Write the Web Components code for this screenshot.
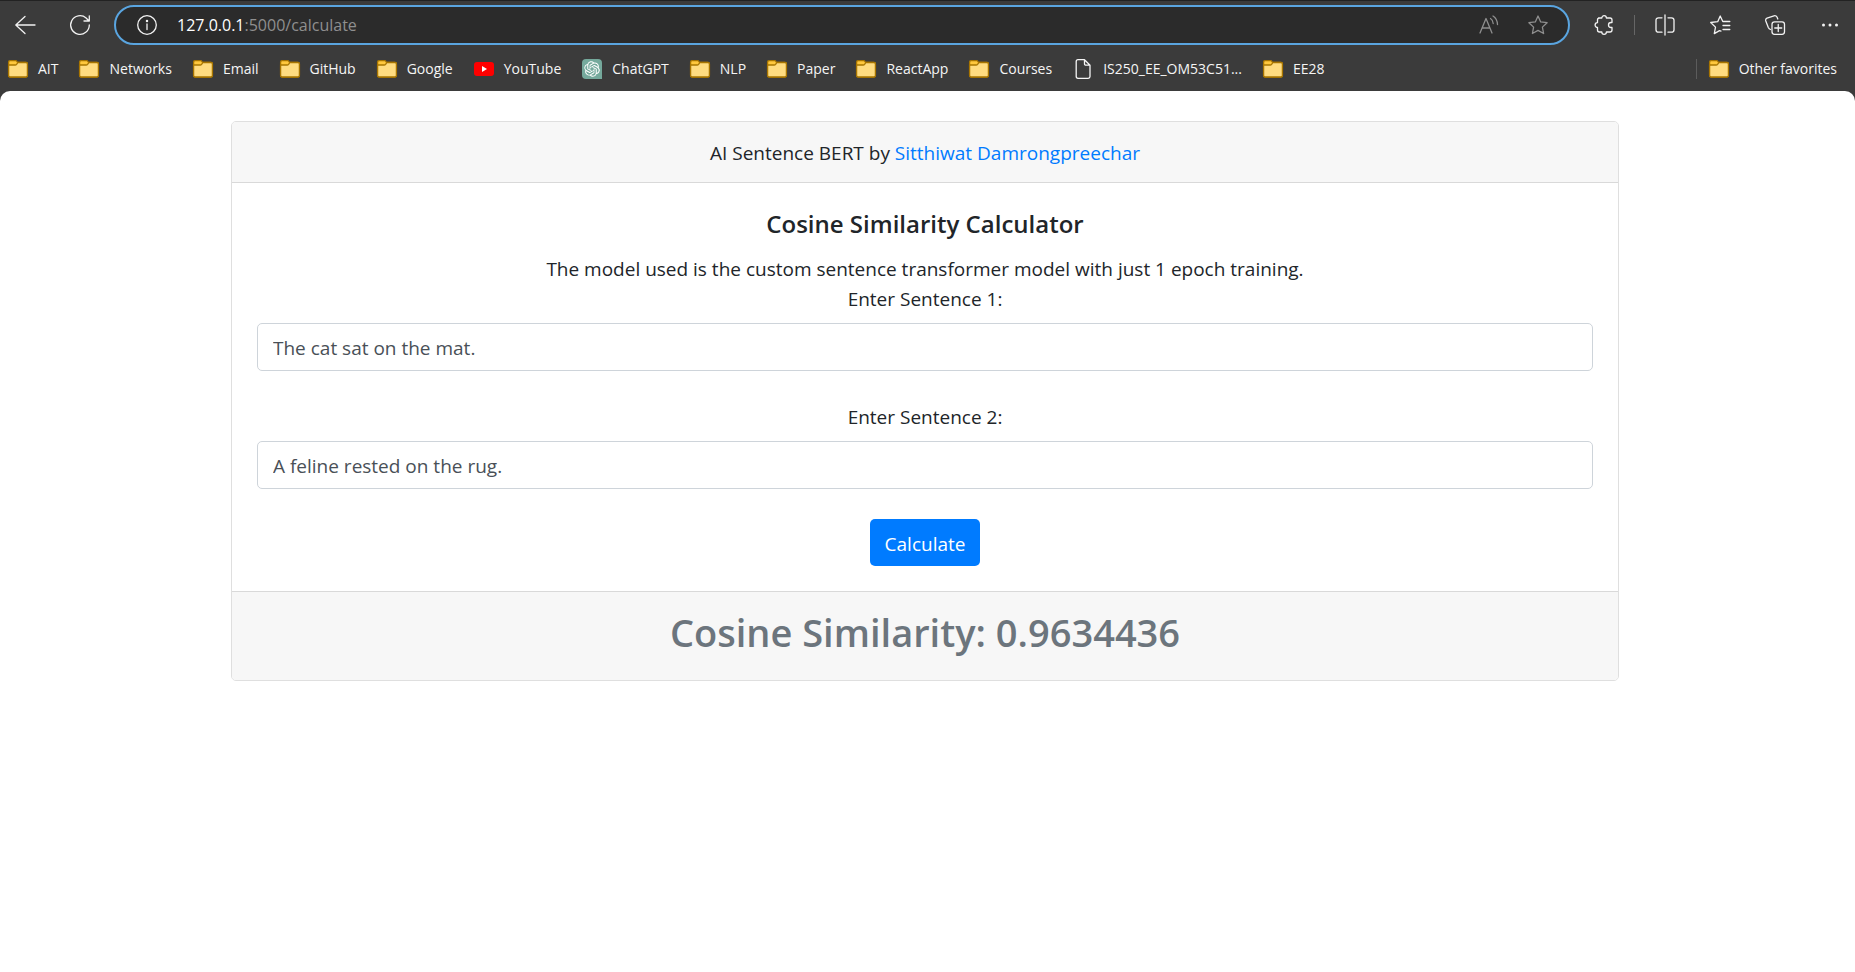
<!DOCTYPE html>
<html lang="en">
<head>
<meta charset="utf-8">
<title>Cosine Similarity Calculator</title>
<style>
html, body { height: 100%; }
body { margin: 0; background: #3b3b3b; color: #212529; font-family: "Open Sans", "Noto Sans", sans-serif; }
</style>
</head>
<body>
<browser-window>
  <address-bar slot="toolbar"></address-bar>
  <favorites-bar slot="toolbar">
    <favorite-item icon="folder">AIT</favorite-item>
    <favorite-item icon="folder">Networks</favorite-item>
    <favorite-item icon="folder">Email</favorite-item>
    <favorite-item icon="folder">GitHub</favorite-item>
    <favorite-item icon="folder">Google</favorite-item>
    <favorite-item icon="youtube">YouTube</favorite-item>
    <favorite-item icon="chatgpt">ChatGPT</favorite-item>
    <favorite-item icon="folder">NLP</favorite-item>
    <favorite-item icon="folder">Paper</favorite-item>
    <favorite-item icon="folder">ReactApp</favorite-item>
    <favorite-item icon="folder">Courses</favorite-item>
    <favorite-item icon="page">IS250_EE_OM53C51...</favorite-item>
    <favorite-item icon="folder">EE28</favorite-item>
    <favorite-item slot="end" icon="folder">Other favorites</favorite-item>
  </favorites-bar>
  <similarity-card>
    <span slot="header">AI Sentence BERT by <author-link href="#author">Sitthiwat Damrongpreechar</author-link></span>
    <span slot="title">Cosine Similarity Calculator</span>
    <span slot="text">The model used is the custom sentence transformer model with just 1 epoch training.</span>
    <sentence-field label="Enter Sentence 1:" value="The cat sat on the mat."></sentence-field>
    <sentence-field label="Enter Sentence 2:" value="A feline rested on the rug."></sentence-field>
    <span slot="result">Cosine Similarity: 0.9634436</span>
  </similarity-card>
</browser-window>

<script>
const ICONS = {
  back: '<path d="M20 10H1M10 1.500.8 10 10 18.500"/>',
  reload: '<path d="M19.300 10a9.300 9.300 0 1 1-3.200-7L19 6M19.300.8V6h-5.300"/>',
  info: '<circle cx="10" cy="10" r="9.300"/><path d="M10 9v5.500"/><circle cx="10" cy="6" r=".6" fill="currentColor"/>',
  read: '<path d="M1 18 7 3.500 13 18M3.200 13h7.600M11.500 3.500c1.600 1 2.500 2.600 2.700 5M14 1c2.800 1.700 4.300 4.500 4.500 8.500"/>',
  star: '<path d="m10 1 2.700 5.900 6.400.8-4.700 4.400 1.200 6.400L10 15.400l-5.600 3.100 1.200-6.400L.9 7.700l6.400-.8z"/>',
  puzzle: '<path d="M4.500 3h3.300a2.300 2.300 0 0 1 4.600 0h3.600q2 0 2 2v2.500h-1a2.500 2.500 0 0 0 0 5h1V15q0 2-2 2h-3.600a2.300 2.300 0 0 1-4.600 0H5.500q-2 0-2-2v-2.600a2.400 2.400 0 0 1 0-4.800V5q0-2 2-2z"/>',
  split: '<path d="M7 2.800H3.500Q1 2.800 1 5.300v9.400q0 2.500 2.500 2.500H7M13 2.800h3.500Q19 2.800 19 5.300v9.400q0 2.500-2.500 2.500H13M10 0v20"/>',
  favorites: '<path d="M19.800 6.500h-7L10.200 1 7.700 6.700l-7 .8 4.800 4.600-1.200 6.500 5.200-3 1.500.5M13 10.500h6.800M13 14.500h6.800"/>',
  collections: '<rect x="7" y="6.800" width="12.500" height="12.500" rx="2.500"/><path d="M13.250 9.500v7M9.750 13h7M5.500 14.500Q4 14 3.300 12.500L.8 6Q.2 4 2 3.200L9 .8q2-.5 3 1.200l.8 2"/>',
  more: '<g fill="currentColor" stroke="none"><circle cx="3.500" cy="10" r="1.500"/><circle cx="10" cy="10" r="1.500"/><circle cx="16.500" cy="10" r="1.500"/></g>',
  folder: '<path fill="#ffc83d" stroke="#a87500" d="M.6 3.200Q.6 1.600 2 1.600h5.600q.8 0 1.200.7l.8 1H18q1.400 0 1.400 1.400v11.900q0 1.400-1.400 1.400H2q-1.400 0-1.400-1.400z"/><path fill="#ffdc80" stroke="#a87500" d="M.6 6h6.500q1 0 1.500-.6l1.300-1.900H18q1.400 0 1.400 1.400v11.700q0 1.400-1.400 1.400H2q-1.400 0-1.400-1.400z"/>',
  youtube: '<rect x="0" y="3" width="20" height="14" rx="3" fill="#f00" stroke="none"/><path d="m8 7 5 3-5 3z" fill="#fff" stroke="none"/>',
  chatgpt: '<path d="M4 0h12q4 0 4 4v16H4q-4 0-4-4V4Q0 0 4 0z" fill="#75a99c" stroke="none"/><path transform="translate(2.200 2.200) scale(.65)" fill="#fff" stroke="none" d="M22.2819 9.8211a5.9847 5.9847 0 0 0-.5157-4.9108 6.0462 6.0462 0 0 0-6.5098-2.9A6.0651 6.0651 0 0 0 4.9807 4.1818a5.9847 5.9847 0 0 0-3.9977 2.9 6.0462 6.0462 0 0 0 .7427 7.0966 5.98 5.98 0 0 0 .511 4.9107 6.051 6.051 0 0 0 6.5146 2.9001A5.9847 5.9847 0 0 0 13.2599 24a6.0557 6.0557 0 0 0 5.7718-4.2058 5.9894 5.9894 0 0 0 3.9977-2.9001 6.0557 6.0557 0 0 0-.7475-7.0729zm-9.022 12.6081a4.4755 4.4755 0 0 1-2.8764-1.0408l.1419-.0804 4.7783-2.7582a.7948.7948 0 0 0 .3927-.6813v-6.7369l2.02 1.1686a.071.071 0 0 1 .038.052v5.5826a4.504 4.504 0 0 1-4.4945 4.4944zm-9.6607-4.1254a4.4708 4.4708 0 0 1-.5346-3.0137l.142.0852 4.783 2.7582a.7712.7712 0 0 0 .7806 0l5.8428-3.3685v2.3324a.0804.0804 0 0 1-.0332.0615L9.74 19.9502a4.4992 4.4992 0 0 1-6.1408-1.6464zM2.3408 7.8956a4.485 4.485 0 0 1 2.3655-1.9728V11.6a.7664.7664 0 0 0 .3879.6765l5.8144 3.3543-2.0201 1.1685a.0757.0757 0 0 1-.071 0l-4.8303-2.7865A4.504 4.504 0 0 1 2.3408 7.872zm16.5963 3.8558L13.1038 8.364 15.1192 7.2a.0757.0757 0 0 1 .071 0l4.8303 2.7913a4.4944 4.4944 0 0 1-.6765 8.1042v-5.6772a.79.79 0 0 0-.407-.667zm2.0107-3.0231l-.142-.0852-4.7735-2.7818a.7759.7759 0 0 0-.7854 0L9.409 9.2297V6.8974a.0662.0662 0 0 1 .0284-.0615l4.8303-2.7866a4.4992 4.4992 0 0 1 6.6802 4.66zM8.3065 12.863l-2.02-1.1638a.0804.0804 0 0 1-.038-.0567V6.0742a4.4992 4.4992 0 0 1 7.3757-3.4537l-.142.0805L8.704 5.459a.7948.7948 0 0 0-.3927.6813zm1.0976-2.3654l2.602-1.4998 2.6069 1.4998v2.9994l-2.5974 1.4997-2.6067-1.4997Z"/>',
  page: '<path d="M5 .7h6.500L17 6.200v11.300q0 1.800-1.800 1.800H5q-1.800 0-1.800-1.800v-15Q3.200.7 5 .7zM11.500.7v4q0 1.500 1.500 1.500h4"/>'
};

function define(name, markup, setup) {
  const template = document.createElement('template');
  template.innerHTML = markup;
  customElements.define(name, class extends HTMLElement {
    connectedCallback() {
      if (this.shadowRoot) return;
      this.attachShadow({ mode: 'open' }).append(template.content.cloneNode(true));
      if (setup) setup(this, this.shadowRoot);
    }
  });
}

define('ui-icon', `<style>
:host { display: block; flex: none; width: 20px; height: 20px; }
svg { display: block; width: 100%; height: 100%; overflow: visible; fill: none; stroke: currentColor; stroke-width: 1.3; stroke-linecap: round; stroke-linejoin: round; }
</style><svg viewBox="0 0 20 20" aria-hidden="true"></svg>`,
(host, root) => { root.querySelector('svg').innerHTML = ICONS[host.getAttribute('name')]; });

define('icon-button', `<style>
:host { display: block; flex: none; }
button { display: block; margin: 0; padding: 0; border: 0; background: none; color: inherit; }
</style><button type="button"></button>`,
(host, root) => {
  const button = root.querySelector('button');
  button.setAttribute('aria-label', host.getAttribute('label'));
  button.innerHTML = `<ui-icon name="${host.getAttribute('name')}"></ui-icon>`;
});

define('address-bar', `<style>
:host { display: flex; align-items: center; padding: 4px 15px 0; border-top: 1px solid #222; color: #f2f2f2; }
.nav { display: flex; gap: 35px; margin-right: 24px; }
.box { flex: 1; display: flex; align-items: center; box-sizing: border-box; height: 40px; padding: 0 20px 0 21px; border: 2px solid #5aa5e0; border-radius: 20px; background: #2b2b2b; }
.url { flex: 1; margin-left: 20px; color: #8f8f8f; font-size: 16px; line-height: 24px; outline: none; }
.url b { color: #fff; font-weight: 400; }
.actions { display: flex; gap: 29px; color: #8f8f8f; }
.tools { display: flex; align-items: center; gap: 35px; margin-left: 24px; }
.split { display: flex; align-items: center; gap: 20px; }
.rule { width: 1px; height: 20px; background: #666; }
</style>
<div class="nav"><icon-button name="back" label="Back"></icon-button><icon-button name="reload" label="Refresh"></icon-button></div>
<div class="box">
  <icon-button name="info" label="View site information"></icon-button>
  <div class="url" role="textbox" aria-label="Address" contenteditable="true" spellcheck="false"><b>127.0.0.1</b>:5000/calculate</div>
  <div class="actions"><icon-button name="read" label="Read aloud"></icon-button><icon-button name="star" label="Add to favorites"></icon-button></div>
</div>
<div class="tools">
  <div class="split"><icon-button name="puzzle" label="Extensions"></icon-button><div class="rule"></div><icon-button name="split" label="Split screen"></icon-button></div>
  <icon-button name="favorites" label="Favorites"></icon-button><icon-button name="collections" label="Collections"></icon-button><icon-button name="more" label="Settings and more"></icon-button>
</div>`);

define('favorites-bar', `<style>
:host { display: flex; align-items: center; justify-content: space-between; box-sizing: border-box; height: 46px; padding: 2px 18px 0 8px; color: #f5f5f5; font-size: 14px; line-height: 20px; }
nav { display: flex; gap: 21px; }
.end { display: flex; padding-left: 12px; border-left: 1px solid #5c5c5c; }
</style><nav aria-label="Favorites"><slot></slot></nav><div class="end"><slot name="end"></slot></div>`);

define('favorite-item', `<style>
:host { display: block; }
a { display: flex; align-items: center; gap: 10px; color: inherit; text-decoration: none; white-space: nowrap; }
</style><a href="#"><span></span><slot></slot></a>`,
(host, root) => { root.querySelector('span').innerHTML = `<ui-icon name="${host.getAttribute('icon')}"></ui-icon>`; });

define('author-link', `<style>
:host { display: inline; }
a { color: #007bff; text-decoration: none; }
</style><a><slot></slot></a>`,
(host, root) => { root.querySelector('a').href = host.getAttribute('href'); });

define('sentence-field', `<style>
:host { display: block; margin-bottom: 30px; }
label { display: block; padding-top: 1px; margin-bottom: 9px; text-align: center; }
input { display: block; box-sizing: border-box; width: 100%; height: 48px; padding: 9px 15px 7px; border: 1px solid #ced4da; border-radius: 5px; background: #fff; color: #495057; font: inherit; }
</style><label for="sentence"></label><input id="sentence" type="text">`,
(host, root) => {
  root.querySelector('label').textContent = host.getAttribute('label');
  root.querySelector('input').value = host.getAttribute('value');
});

define('similarity-card', `<style>
:host { display: block; box-sizing: border-box; max-width: 1388px; margin: 30px auto; border: 1px solid #dfdfdf; border-radius: 5px; overflow: hidden; background: #fff; font-size: 19px; line-height: 30px; text-align: center; }
header { padding: 16px 25px 14px; border-bottom: 1px solid #d9d9d9; background: #f7f7f7; }
form { padding: 26px 25px 25px; margin: 0; }
h5 { margin: 0 0 15px; font-size: 24px; font-weight: 600; line-height: 30px; }
p { margin: 0 0 -1px; }
button { display: block; margin: 0 auto; height: 47px; padding: 2px 15px 0; border: 0; border-radius: 5px; background: #007bff; color: #fff; font: inherit; }
footer { padding: 16px 25px 14px; border-top: 1px solid #d9d9d9; background: #f7f7f7; color: #6c757d; }
h1 { margin: 0 0 10px; font-size: 38px; font-weight: 600; line-height: 48px; }
</style>
<header><slot name="header"></slot></header>
<form>
  <h5><slot name="title"></slot></h5>
  <p><slot name="text"></slot></p>
  <slot></slot>
  <button type="button">Calculate</button>
</form>
<footer><h1><slot name="result"></slot></h1></footer>`);

define('browser-window', `<style>
:host { display: flex; flex-direction: column; min-height: 100%; }
main { flex: 1; display: flow-root; padding-right: 5px; border-radius: 10px 10px 0 0; background: #fff; }
</style><slot name="toolbar"></slot><main><slot></slot></main>`);
</script>
</body>
</html>
